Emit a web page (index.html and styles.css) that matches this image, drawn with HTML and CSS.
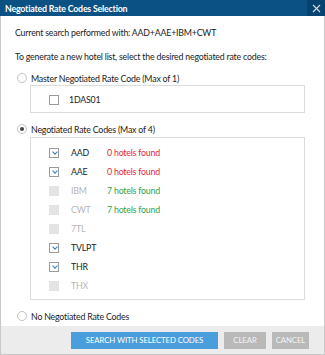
FILE: index.html
```html
<!DOCTYPE html>
<html lang="en">
<head>
    <meta charset="UTF-8">
    <link rel="stylesheet" href="styles.css">
</head>
<body>
    <div class="dialog">
        <div class="titlebar">
            <span class="title">Negotiated Rate Codes Selection</span>
            <span class="close">
                <svg width="9" height="9" viewBox="0 0 9 9"><path d="M1 1L8 8M8 1L1 8" stroke="#c9d8e6" stroke-width="1.2"/></svg>
            </span>
        </div>
        <div class="content">
            <p class="line first">Current search performed with: AAD+AAE+IBM+CWT</p>
            <p class="line second">To generate a new hotel list, select the desired negotiated rate codes:</p>

            <div class="option master-opt"><span class="radio"></span>Master Negotiated Rate Code (Max of 1)</div>
            <div class="box master">
                <div class="row"><span class="check"></span><span class="code">1DAS01</span></div>
            </div>

            <div class="option codes-opt"><span class="radio on"></span>Negotiated Rate Codes (Max of 4)</div>
            <div class="box codes">
                <div class="row"><span class="check ticked"></span><span class="code">AAD</span><span class="found none">0 hotels found</span></div>
                <div class="row"><span class="check ticked"></span><span class="code">AAE</span><span class="found none">0 hotels found</span></div>
                <div class="row off"><span class="check"></span><span class="code">IBM</span><span class="found some">7 hotels found</span></div>
                <div class="row off"><span class="check"></span><span class="code">CWT</span><span class="found some">7 hotels found</span></div>
                <div class="row off"><span class="check"></span><span class="code">7TL</span></div>
                <div class="row"><span class="check ticked"></span><span class="code">TVLPT</span></div>
                <div class="row"><span class="check ticked"></span><span class="code">THR</span></div>
                <div class="row off"><span class="check"></span><span class="code">THX</span></div>
            </div>

            <div class="option last"><span class="radio"></span>No Negotiated Rate Codes</div>
        </div>
        <div class="footer">
            <button class="btn primary">SEARCH WITH SELECTED CODES</button>
            <button class="btn grey clear">CLEAR</button>
            <button class="btn grey cancel">CANCEL</button>
        </div>
    </div>
</body>
</html>
```
FILE: styles.css
```css
*{
    box-sizing: border-box;
}
body{
    margin: 0;
    font-family: Lato, "Noto Sans", sans-serif;
    font-size: 8.8px;
    letter-spacing: -0.2px;
    color: #222;
}
.dialog{
    width: 325px;
    height: 355px;
    border: 1px solid #c8c8c8;
    border-top: none;
    display: flex;
    flex-direction: column;
    background: white;
}
.titlebar{
    height: 16px;
    flex: none;
    background: #0b5183;
    display: flex;
    align-items: center;
    justify-content: space-between;
    margin: 0 -1px;
}
.title{
    color: white;
    font-weight: bold;
    padding-left: 5px;
    font-size: 8.8px;
}
.close{
    width: 18px;
    height: 16px;
    background: #064370;
    display: flex;
    align-items: center;
    justify-content: center;
}
.content{
    flex: 1;
    padding: 0 19px 0 14px;
    display: flex;
    flex-direction: column;
}
.line{
    margin: 0;
    height: 12px;
    line-height: 12px;
    white-space: nowrap;
}
.first{
    margin-top: 11px;
}
.second{
    margin-top: 12px;
}
.option{
    display: flex;
    align-items: center;
    height: 14px;
    margin-left: 2px;
    flex: none;
}
.master-opt{
    margin-top: 8px;
}
.codes-opt{
    margin-top: 9px;
}
.last{
    margin-top: 9px;
}
.radio{
    width: 10px;
    height: 10px;
    border: 1px solid #c4c4c4;
    border-radius: 50%;
    margin-right: 4px;
    display: flex;
    align-items: center;
    justify-content: center;
}
.radio.on::after{
    content: "";
    width: 4px;
    height: 4px;
    border-radius: 50%;
    background: #444;
}
.box{
    margin-left: 15px;
    border: 1px solid #dcdcdc;
    flex: none;
}
.master{
    height: 28px;
    padding-top: 4px;
}
.codes{
    margin-top: 1px;
    padding: 5px 0 4px;
}
.row{
    display: flex;
    align-items: center;
    height: 19px;
    padding-left: 18px;
}
.check{
    width: 10px;
    height: 10px;
    border: 1px solid #9a9a9a;
    background: white;
    margin-right: 12px;
    position: relative;
}
.master .check{
    margin-right: 10px;
}
.check.ticked::after{
    content: "";
    position: absolute;
    left: 2.5px;
    top: 1px;
    width: 3px;
    height: 3px;
    border-right: 1px solid #2f7fbf;
    border-bottom: 1px solid #2f7fbf;
    transform: rotate(45deg);
}
.row.off .check{
    border-color: #e4e4e4;
    background: #e4e4e4;
}
.row.off .code{
    color: #b5b5b5;
}
.code{
    width: 36px;
}
.found.none{
    color: #e0283c;
}
.found.some{
    color: #2ea44f;
}
.footer{
    height: 28px;
    flex: none;
    background: #ececec;
    display: flex;
    align-items: center;
    justify-content: flex-end;
    gap: 6px;
    padding-right: 15px;
}
.btn{
    border: none;
    height: 17px;
    font-family: inherit;
    font-size: 7.8px;
    letter-spacing: -0.1px;
    color: white;
    padding: 0;
}
.primary{
    width: 147px;
    background: #4a9edb;
}
.grey{
    background: #b9b9b9;
    color: #f4f4f4;
}
.clear{
    width: 42px;
}
.cancel{
    width: 37px;
}
```
